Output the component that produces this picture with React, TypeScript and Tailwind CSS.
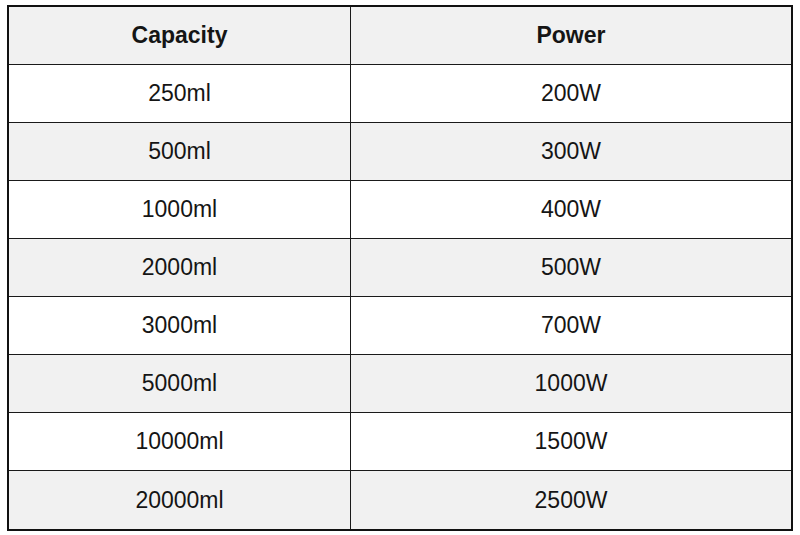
import React from "react";

const rows: [string, string][] = [
  ["250ml", "200W"],
  ["500ml", "300W"],
  ["1000ml", "400W"],
  ["2000ml", "500W"],
  ["3000ml", "700W"],
  ["5000ml", "1000W"],
  ["10000ml", "1500W"],
  ["20000ml", "2500W"],
];

export default function App() {
  return (
    <div className="w-[800px] h-[535px] bg-white pt-[5px] pl-[7px] overflow-hidden" style={{ fontFamily: '"Liberation Sans", Arial, sans-serif' }}>
      <div className="w-[786px] border-2 border-[#111] text-[#151515] text-[23px]">
        <div className="grid grid-cols-[342px_1fr] h-[58px] border-b-[1.5px] border-[#1a1a1a] bg-[#f1f1f1] font-bold">
          <div className="flex items-center justify-center border-r-[1.5px] border-[#1a1a1a]">Capacity</div>
          <div className="flex items-center justify-center">Power</div>
        </div>
        {rows.map(([c, p], i) => (
          <div
            key={c}
            className={
              "grid grid-cols-[342px_1fr] h-[58px] " +
              (i < rows.length - 1 ? "border-b-[1.5px] border-[#1a1a1a] " : "") +
              (i % 2 === 1 ? "bg-[#f1f1f1]" : "bg-white")
            }
          >
            <div className="flex items-center justify-center border-r-[1.5px] border-[#1a1a1a]">{c}</div>
            <div className="flex items-center justify-center">{p}</div>
          </div>
        ))}
      </div>
    </div>
  );
}
